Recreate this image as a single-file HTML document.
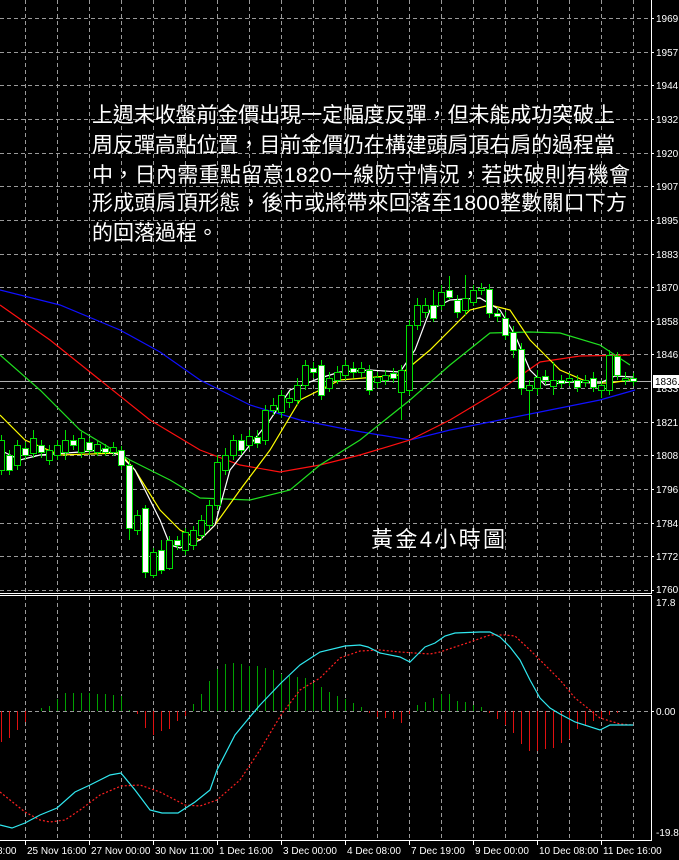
<!DOCTYPE html>
<html><head><meta charset="utf-8"><style>
html,body{margin:0;padding:0;background:#000;width:679px;height:860px;overflow:hidden}
svg{display:block}
.t{font-family:"Liberation Sans","Noto Sans CJK TC",sans-serif;font-size:21px;fill:#fff}
.ax{font-family:"Liberation Sans",sans-serif;font-size:10px;fill:#fff}
</style></head><body>
<svg width="679" height="860" viewBox="0 0 679 860" xmlns="http://www.w3.org/2000/svg">
<rect width="679" height="860" fill="#000"/>
<g stroke="#9a9a9a" stroke-width="1" stroke-dasharray="4,3" fill="none">
<path d="M25.5 0V593M57.5 0V593M89.5 0V593M121.5 0V593M153.5 0V593M185.5 0V593M217.5 0V593M249.5 0V593M281.5 0V593M313.5 0V593M345.5 0V593M377.5 0V593M409.5 0V593M441.5 0V593M473.5 0V593M505.5 0V593M537.5 0V593M569.5 0V593M601.5 0V593M633.5 0V593"/>
<path d="M25.5 596V840M57.5 596V840M89.5 596V840M121.5 596V840M153.5 596V840M185.5 596V840M217.5 596V840M249.5 596V840M281.5 596V840M313.5 596V840M345.5 596V840M377.5 596V840M409.5 596V840M441.5 596V840M473.5 596V840M505.5 596V840M537.5 596V840M569.5 596V840M601.5 596V840M633.5 596V840"/>
<path d="M0 18.5H651M0 52.5H651M0 85.5H651M0 119.5H651M0 153.5H651M0 186.5H651M0 220.5H651M0 254.5H651M0 287.5H651M0 321.5H651M0 354.5H651M0 388.5H651M0 422.5H651M0 455.5H651M0 489.5H651M0 523.5H651M0 556.5H651M0 590.5H651"/>
<path d="M0 711.5H651"/>
</g>
<line x1="0" y1="381.5" x2="651" y2="381.5" stroke="#b0b0b0"/>
<polyline fill="none" stroke="#1010ff" stroke-width="1.2" points="0,290 60,305 120,330 160,352 200,380 250,405 300,420 350,430 410,440 450,430 500,420 550,410 600,400 635,390"/>
<polyline fill="none" stroke="#ff1010" stroke-width="1.2" points="0,305 50,340 100,380 150,420 200,450 240,465 280,472 320,465 360,455 410,440 450,420 500,390 540,362 580,356 630,355"/>
<polyline fill="none" stroke="#20e020" stroke-width="1.2" points="0,355 40,390 80,430 110,448 130,460 170,480 200,498 250,500 290,490 320,465 360,440 410,400 450,365 490,333 530,332 560,333 600,345 630,365"/>
<polyline fill="none" stroke="#ffff00" stroke-width="1.2" points="0,415 25,440 60,455 120,453 135,470 160,510 180,530 200,540 215,525 240,490 270,450 300,400 340,380 400,375 430,350 470,310 490,305 510,310 530,340 560,370 590,383 610,383 630,380"/>
<polyline fill="none" stroke="#ffffff" stroke-width="1.2" points="0,450 20,460 40,455 80,452 100,450 120,455 135,470 160,520 170,545 180,548 200,540 215,525 230,470 250,445 270,420 290,390 320,378 340,372 370,370 400,372 415,350 430,310 450,300 480,298 500,310 515,335 530,370 545,385 570,382 600,383 615,376 633,377"/>
<g stroke="#00e000" stroke-width="1">
<path d="M1.5 435V475M9.5 450V475M17.5 440V470M25.5 442V460M33.5 430V458M41.5 440V458M49.5 445V465M57.5 440V460M65.5 430V460M73.5 435V450M81.5 432V458M89.5 438V455M97.5 440V456M105.5 444V456M113.5 442V456M121.5 446V470M129.5 460V540M137.5 510V535M145.5 505V578M153.5 548V578M161.5 540V574M169.5 536V570M177.5 536V550M185.5 528V555M193.5 526V550M201.5 515V540M209.5 500V530M217.5 455V510M225.5 448V475M233.5 435V460M241.5 434V455M249.5 430V450M257.5 430V448M265.5 405V445M273.5 398V415M281.5 390V418M289.5 392V408M297.5 378V405M305.5 360V390M313.5 362V378M321.5 360V400M329.5 372V392M337.5 366V384M345.5 360V380M353.5 362V378M361.5 362V378M369.5 365V395M377.5 372V388M385.5 370V385M393.5 368V383M401.5 365V420M409.5 320V395M417.5 298V330M425.5 298V318M433.5 290V322M441.5 285V310M449.5 276V300M457.5 295V318M465.5 275V315M473.5 285V306M481.5 283V295M489.5 284V318M497.5 308V322M505.5 312V340M513.5 326V358M521.5 343V395M529.5 380V420M537.5 370V395M545.5 370V385M553.5 362V395M561.5 375V388M569.5 373V386M577.5 375V392M585.5 375V387M593.5 372V392M601.5 380V398M609.5 350V395M617.5 352V380M625.5 372V385M633.5 373V386"/>
</g>
<g stroke="#00e000" stroke-width="1">
<rect x="-1.5" y="440.5" width="6" height="30" fill="#000"/>
<rect x="6.5" y="455.5" width="6" height="15" fill="#fff"/>
<rect x="14.5" y="445.5" width="6" height="20" fill="#000"/>
<rect x="22.5" y="448.5" width="6" height="7" fill="#fff"/>
<rect x="30.5" y="438.5" width="6" height="15" fill="#000"/>
<rect x="38.5" y="445.5" width="6" height="7" fill="#fff"/>
<rect x="46.5" y="450.5" width="6" height="10" fill="#000"/>
<rect x="54.5" y="445.5" width="6" height="10" fill="#000"/>
<rect x="62.5" y="440.5" width="6" height="12" fill="#000"/>
<rect x="70.5" y="440.5" width="6" height="5" fill="#fff"/>
<rect x="78.5" y="438.5" width="6" height="14" fill="#000"/>
<rect x="86.5" y="442.5" width="6" height="8" fill="#fff"/>
<rect x="94.5" y="444.5" width="6" height="8" fill="#000"/>
<rect x="102.5" y="448.5" width="6" height="4" fill="#fff"/>
<rect x="110.5" y="447.5" width="6" height="5" fill="#000"/>
<rect x="118.5" y="450.5" width="6" height="15" fill="#fff"/>
<rect x="126.5" y="465.5" width="6" height="63" fill="#fff"/>
<rect x="134.5" y="515.5" width="6" height="15" fill="#000"/>
<rect x="142.5" y="508.5" width="6" height="64" fill="#fff"/>
<rect x="150.5" y="552.5" width="6" height="23" fill="#000"/>
<rect x="158.5" y="550.5" width="6" height="20" fill="#fff"/>
<rect x="166.5" y="540.5" width="6" height="28" fill="#000"/>
<rect x="174.5" y="540.5" width="6" height="5" fill="#fff"/>
<rect x="182.5" y="532.5" width="6" height="18" fill="#000"/>
<rect x="190.5" y="530.5" width="6" height="15" fill="#000"/>
<rect x="198.5" y="520.5" width="6" height="15" fill="#000"/>
<rect x="206.5" y="505.5" width="6" height="20" fill="#000"/>
<rect x="214.5" y="462.5" width="6" height="43" fill="#000"/>
<rect x="222.5" y="455.5" width="6" height="15" fill="#000"/>
<rect x="230.5" y="440.5" width="6" height="15" fill="#000"/>
<rect x="238.5" y="440.5" width="6" height="10" fill="#fff"/>
<rect x="246.5" y="436.5" width="6" height="9" fill="#000"/>
<rect x="254.5" y="437.5" width="6" height="6" fill="#fff"/>
<rect x="262.5" y="410.5" width="6" height="30" fill="#000"/>
<rect x="270.5" y="405.5" width="6" height="5" fill="#000"/>
<rect x="278.5" y="395.5" width="6" height="17" fill="#000"/>
<rect x="286.5" y="398.5" width="6" height="4" fill="#000"/>
<rect x="294.5" y="385.5" width="6" height="15" fill="#000"/>
<rect x="302.5" y="365.5" width="6" height="20" fill="#000"/>
<rect x="310.5" y="368.5" width="6" height="4" fill="#fff"/>
<rect x="318.5" y="365.5" width="6" height="30" fill="#fff"/>
<rect x="326.5" y="378.5" width="6" height="10" fill="#000"/>
<rect x="334.5" y="372.5" width="6" height="8" fill="#000"/>
<rect x="342.5" y="365.5" width="6" height="10" fill="#000"/>
<rect x="350.5" y="368.5" width="6" height="4" fill="#fff"/>
<rect x="358.5" y="368.5" width="6" height="4" fill="#000"/>
<rect x="366.5" y="370.5" width="6" height="20" fill="#fff"/>
<rect x="374.5" y="377.5" width="6" height="5" fill="#000"/>
<rect x="382.5" y="375.5" width="6" height="5" fill="#000"/>
<rect x="390.5" y="373.5" width="6" height="5" fill="#fff"/>
<rect x="398.5" y="370.5" width="6" height="22" fill="#000"/>
<rect x="406.5" y="325.5" width="6" height="65" fill="#000"/>
<rect x="414.5" y="305.5" width="6" height="20" fill="#000"/>
<rect x="422.5" y="305.5" width="6" height="7" fill="#000"/>
<rect x="430.5" y="305.5" width="6" height="13" fill="#fff"/>
<rect x="438.5" y="292.5" width="6" height="13" fill="#000"/>
<rect x="446.5" y="290.5" width="6" height="7" fill="#fff"/>
<rect x="454.5" y="300.5" width="6" height="12" fill="#fff"/>
<rect x="462.5" y="298.5" width="6" height="12" fill="#000"/>
<rect x="470.5" y="290.5" width="6" height="12" fill="#000"/>
<rect x="478.5" y="288.5" width="6" height="2" fill="#000"/>
<rect x="486.5" y="289.5" width="6" height="24" fill="#fff"/>
<rect x="494.5" y="313.5" width="6" height="3" fill="#fff"/>
<rect x="502.5" y="318.5" width="6" height="17" fill="#fff"/>
<rect x="510.5" y="332.5" width="6" height="18" fill="#fff"/>
<rect x="518.5" y="349.5" width="6" height="39" fill="#fff"/>
<rect x="526.5" y="385.5" width="6" height="5" fill="#000"/>
<rect x="534.5" y="377.5" width="6" height="11" fill="#000"/>
<rect x="542.5" y="376.5" width="6" height="4" fill="#fff"/>
<rect x="550.5" y="380.5" width="6" height="6" fill="#000"/>
<rect x="558.5" y="380.5" width="6" height="3" fill="#fff"/>
<rect x="566.5" y="378.5" width="6" height="3" fill="#000"/>
<rect x="574.5" y="380.5" width="6" height="7" fill="#fff"/>
<rect x="582.5" y="380.5" width="6" height="2" fill="#000"/>
<rect x="590.5" y="378.5" width="6" height="9" fill="#fff"/>
<rect x="598.5" y="385.5" width="6" height="5" fill="#000"/>
<rect x="606.5" y="355.5" width="6" height="35" fill="#000"/>
<rect x="614.5" y="356.5" width="6" height="19" fill="#fff"/>
<rect x="622.5" y="378.5" width="6" height="2" fill="#000"/>
<rect x="630.5" y="378.5" width="6" height="3" fill="#fff"/>
</g>
<g stroke="#00a000" stroke-width="1">
<path d="M41.5 711V708M49.5 711V706M57.5 711V699M65.5 711V693M73.5 711V693M81.5 711V693M89.5 711V693M97.5 711V694M105.5 711V694M113.5 711V695M121.5 711V696M129.5 711V710M193.5 711V704M201.5 711V694M209.5 711V681M217.5 711V669M225.5 711V664M233.5 711V663M241.5 711V664M249.5 711V666M257.5 711V666M265.5 711V668M273.5 711V670M281.5 711V674M289.5 711V676M297.5 711V677M305.5 711V678M313.5 711V683M321.5 711V687M329.5 711V692M337.5 711V696M345.5 711V699M353.5 711V703M361.5 711V707M417.5 711V705M425.5 711V702M433.5 711V698M441.5 711V694M449.5 711V694M457.5 711V701M465.5 711V702M473.5 711V705M481.5 711V707"/>
</g>
<g stroke="#e01010" stroke-width="1">
<path d="M1.5 711V742M9.5 711V738M17.5 711V730M25.5 711V722M137.5 711V714M145.5 711V728M153.5 711V735M161.5 711V731M169.5 711V729M177.5 711V721M185.5 711V716M369.5 711V713M377.5 711V717M385.5 711V718M393.5 711V719M401.5 711V723M409.5 711V714M489.5 711V713M497.5 711V719M505.5 711V725M513.5 711V733M521.5 711V744M529.5 711V751M537.5 711V751M545.5 711V749M553.5 711V748M561.5 711V743M569.5 711V739M577.5 711V729M585.5 711V726M593.5 711V721M601.5 711V718M609.5 711V715M617.5 711V713"/>
</g>
<polyline fill="none" stroke="#ff2020" stroke-width="1.2" stroke-dasharray="2,2" points="0,792 25,812 40,820 50,822 65,820 80,810 100,795 121,786 140,785 160,792 185,805 200,806 217,800 240,780 260,750 281,715 300,690 320,678 340,658 360,651 380,650 400,652 430,654 440,652 455,647 470,642 490,635 505,635 515,636 530,650 545,665 560,680 575,698 600,718 620,724 633,725"/>
<polyline fill="none" stroke="#30e8f0" stroke-width="1.2" points="0,825 12,828 25,823 40,815 57,808 75,792 90,785 110,775 121,773 135,790 150,810 162,813 178,813 195,802 210,790 217,770 235,735 249,718 260,705 281,683 300,665 320,652 345,646 360,645 368,647 380,653 400,657 410,662 417,655 425,647 435,643 445,636 455,633 480,632 490,632 500,637 510,647 520,660 530,680 540,698 550,708 560,714 575,722 600,730 610,725 633,725"/>
<g stroke="#fff" stroke-width="1" fill="none">
<path d="M651.5 0V593.5H0"/>
<path d="M0 595.5H651.5V840.5H0"/>
<path d="M651 18.5h3M651 52.5h3M651 85.5h3M651 119.5h3M651 153.5h3M651 186.5h3M651 220.5h3M651 254.5h3M651 287.5h3M651 321.5h3M651 354.5h3M651 422.5h3M651 455.5h3M651 489.5h3M651 523.5h3M651 556.5h3M651 590.5h3M651 711.5h3"/>
<path d="M25.5 840V845M89.5 840V845M153.5 840V845M217.5 840V845M281.5 840V845M345.5 840V845M409.5 840V845M473.5 840V845M537.5 840V845M601.5 840V845"/>
</g>
<g class="ax">
<text x="656" y="22">1969.</text><text x="656" y="56">1957.</text><text x="656" y="89">1944.</text><text x="656" y="123">1932.</text><text x="656" y="157">1920.</text><text x="656" y="190">1907.</text><text x="656" y="224">1895.</text><text x="656" y="258">1883.</text><text x="656" y="291">1870.</text><text x="656" y="325">1858.</text><text x="656" y="358">1846.</text><text x="656" y="392">1833.</text><text x="656" y="426">1821.</text><text x="656" y="459">1808.</text><text x="656" y="493">1796.</text><text x="656" y="527">1784.</text><text x="656" y="560">1772.</text><text x="656" y="593">1760.</text>
<text x="656" y="606">17.8</text><text x="656" y="715">0.00</text><text x="656" y="836">-19.84</text>
</g>
<rect x="653" y="375" width="26" height="13" fill="#fff"/>
<text x="655" y="385" class="ax" style="fill:#000">1836.</text>
<g class="ax">
<text x="-3" y="854">8:00</text><text x="27" y="854">25 Nov 16:00</text><text x="91" y="854">27 Nov 00:00</text><text x="155" y="854">30 Nov 11:00</text><text x="219" y="854">1 Dec 16:00</text><text x="283" y="854">3 Dec 00:00</text><text x="347" y="854">4 Dec 08:00</text><text x="411" y="854">7 Dec 19:00</text><text x="475" y="854">9 Dec 00:00</text><text x="539" y="854">10 Dec 08:00</text><text x="603" y="854">11 Dec 16:00</text>
</g>
<g class="t">
<text x="92" y="122" textLength="523">上週末收盤前金價出現一定幅度反彈，但未能成功突破上</text>
<text x="92" y="152" textLength="523">周反彈高點位置，目前金價仍在構建頭肩頂右肩的過程當</text>
<text x="92" y="182" textLength="538">中，日內需重點留意1820一線防守情況，若跌破則有機會</text>
<text x="92" y="210" textLength="535">形成頭肩頂形態，後市或將帶來回落至1800整數關口下方</text>
<text x="92" y="240">的回落過程。</text>
<text x="371" y="547" style="font-size:22px" textLength="134">黃金4小時圖</text>
</g>
</svg>
</body></html>
